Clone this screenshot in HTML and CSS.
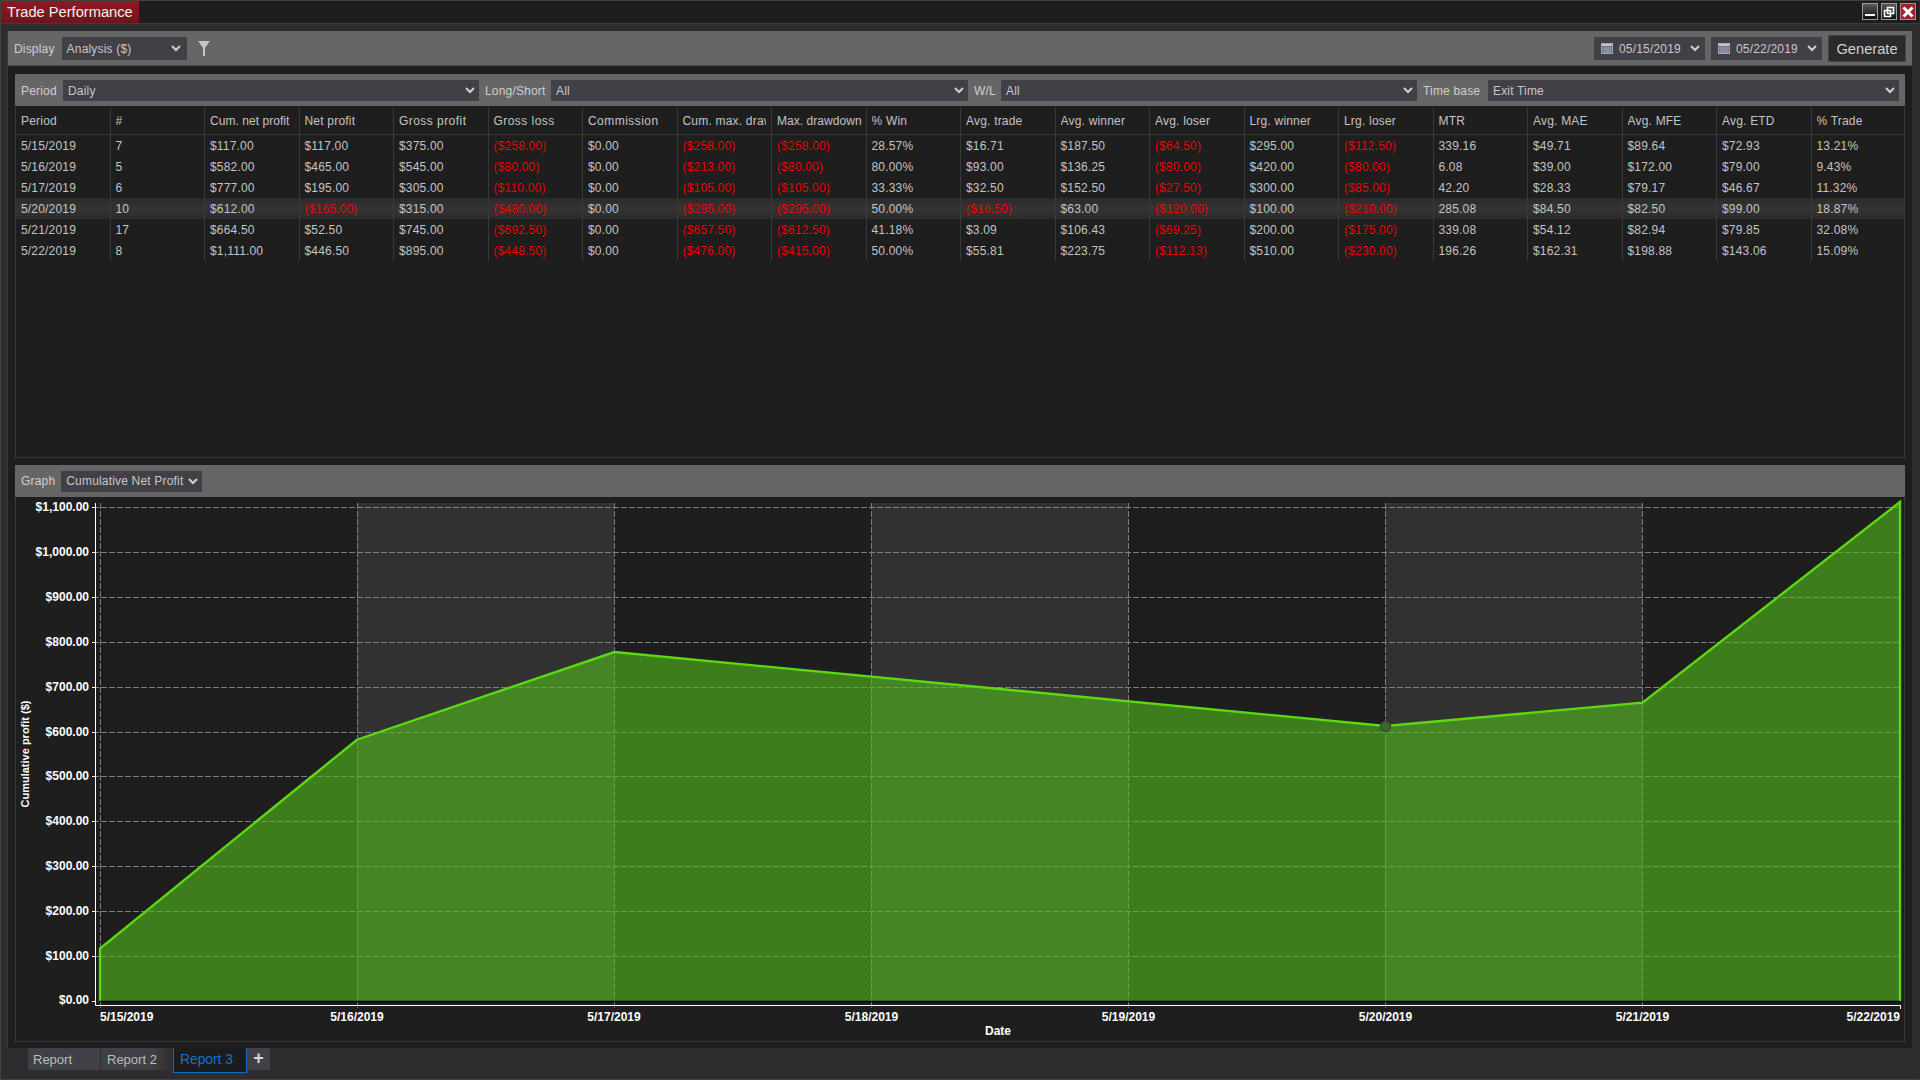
FILE: index.html
```html
<!DOCTYPE html>
<html lang="en">
<head>
<meta charset="utf-8">
<title>Trade Performance</title>
<link rel="stylesheet" href="styles.css">
</head>
<body>
<div class="window">
  <header class="titlebar">
    <div class="title-tab">Trade Performance</div>
    <div class="win-controls">
      <div class="win-btn"><svg width="14" height="14" viewBox="0 0 14 14"><rect x="2" y="9" width="10" height="2" fill="#fff"/></svg></div>
      <div class="win-btn"><svg width="14" height="14" viewBox="0 0 14 14"><path d="M5.5 2.5h6v6h-6zM2.5 5.5h6v6h-6z" fill="none" stroke="#fff" stroke-width="1.6"/></svg></div>
      <div class="win-btn win-close"><svg width="14" height="14" viewBox="0 0 14 14"><path d="M2.5 2.5l9 9M11.5 2.5l-9 9" stroke="#fff" stroke-width="3"/></svg></div>
    </div>
  </header>

  <main class="main">
    <div class="toolbar">
      <span class="label">Display</span>
      <div class="select sel-display"><span>Analysis ($)</span><svg class="chev" width="10" height="7" viewBox="0 0 10 7"><path d="M1 1l4 4 4-4" fill="none" stroke="#d0d0d0" stroke-width="2"/></svg></div>
      <svg class="filter-icon" width="13" height="15" viewBox="0 0 13 15"><path d="M0 0h12L7 7v8H5V7z" fill="#c6c6c6"/></svg>
      <div class="spacer"></div>
      <div class="select sel-date">
        <svg class="cal" width="12" height="11" viewBox="0 0 12 11"><rect x="0.5" y="0.5" width="11" height="10" fill="#46464c" stroke="#a8a8ac"/><rect x="1" y="1" width="10" height="2" fill="#c0c4cc"/><path d="M1 5h10M1 7h10M1 9h10M3 3v7M5 3v7M7 3v7M9 3v7" stroke="#9aa6bc" stroke-width="1"/></svg>
        <span>05/15/2019</span><svg class="chev" width="10" height="7" viewBox="0 0 10 7"><path d="M1 1l4 4 4-4" fill="none" stroke="#d0d0d0" stroke-width="2"/></svg></div>
      <div class="select sel-date">
        <svg class="cal" width="12" height="11" viewBox="0 0 12 11"><rect x="0.5" y="0.5" width="11" height="10" fill="#46464c" stroke="#a8a8ac"/><rect x="1" y="1" width="10" height="2" fill="#c0c4cc"/><path d="M1 5h10M1 7h10M1 9h10M3 3v7M5 3v7M7 3v7M9 3v7" stroke="#9aa6bc" stroke-width="1"/></svg>
        <span>05/22/2019</span><svg class="chev" width="10" height="7" viewBox="0 0 10 7"><path d="M1 1l4 4 4-4" fill="none" stroke="#d0d0d0" stroke-width="2"/></svg></div>
      <div class="generate">Generate</div>
    </div>

    <div class="content">
      <div class="filterbar">
        <span class="label lbl-period">Period</span>
        <div class="select sel-wide"><span>Daily</span><svg class="chev" width="10" height="7" viewBox="0 0 10 7"><path d="M1 1l4 4 4-4" fill="none" stroke="#d0d0d0" stroke-width="2"/></svg></div>
        <span class="label lbl-ls">Long/Short</span>
        <div class="select sel-wide sel-second"><span>All</span><svg class="chev" width="10" height="7" viewBox="0 0 10 7"><path d="M1 1l4 4 4-4" fill="none" stroke="#d0d0d0" stroke-width="2"/></svg></div>
        <span class="label lbl-wl">W/L</span>
        <div class="select sel-wide"><span>All</span><svg class="chev" width="10" height="7" viewBox="0 0 10 7"><path d="M1 1l4 4 4-4" fill="none" stroke="#d0d0d0" stroke-width="2"/></svg></div>
        <span class="label lbl-tb">Time base</span>
        <div class="select sel-last"><span>Exit Time</span><svg class="chev" width="10" height="7" viewBox="0 0 10 7"><path d="M1 1l4 4 4-4" fill="none" stroke="#d0d0d0" stroke-width="2"/></svg></div>
      </div>

      <div class="table-panel">
        <table class="grid">
          <thead>
            <tr><th><div>Period</div></th><th><div>#</div></th><th class="th-tight"><div>Cum. net profit</div></th><th><div>Net profit</div></th><th class="th-wide"><div>Gross profit</div></th><th class="th-wide"><div>Gross loss</div></th><th class="th-wide"><div>Commission</div></th><th class="th-clip"><div>Cum. max. drawdown</div></th><th class="th-tight"><div>Max. drawdown</div></th><th><div>% Win</div></th><th><div>Avg. trade</div></th><th><div>Avg. winner</div></th><th><div>Avg. loser</div></th><th><div>Lrg. winner</div></th><th><div>Lrg. loser</div></th><th><div>MTR</div></th><th><div>Avg. MAE</div></th><th><div>Avg. MFE</div></th><th><div>Avg. ETD</div></th><th><div>% Trade</div></th></tr>
          </thead>
          <tbody>
            <tr><td>5/15/2019</td><td>7</td><td>$117.00</td><td>$117.00</td><td>$375.00</td><td class="neg">($258.00)</td><td>$0.00</td><td class="neg">($258.00)</td><td class="neg">($258.00)</td><td>28.57%</td><td>$16.71</td><td>$187.50</td><td class="neg">($64.50)</td><td>$295.00</td><td class="neg">($112.50)</td><td>339.16</td><td>$49.71</td><td>$89.64</td><td>$72.93</td><td>13.21%</td></tr>
            <tr><td>5/16/2019</td><td>5</td><td>$582.00</td><td>$465.00</td><td>$545.00</td><td class="neg">($80.00)</td><td>$0.00</td><td class="neg">($213.00)</td><td class="neg">($80.00)</td><td>80.00%</td><td>$93.00</td><td>$136.25</td><td class="neg">($80.00)</td><td>$420.00</td><td class="neg">($80.00)</td><td>6.08</td><td>$39.00</td><td>$172.00</td><td>$79.00</td><td>9.43%</td></tr>
            <tr><td>5/17/2019</td><td>6</td><td>$777.00</td><td>$195.00</td><td>$305.00</td><td class="neg">($110.00)</td><td>$0.00</td><td class="neg">($105.00)</td><td class="neg">($105.00)</td><td>33.33%</td><td>$32.50</td><td>$152.50</td><td class="neg">($27.50)</td><td>$300.00</td><td class="neg">($85.00)</td><td>42.20</td><td>$28.33</td><td>$79.17</td><td>$46.67</td><td>11.32%</td></tr>
            <tr class="selected"><td>5/20/2019</td><td>10</td><td>$612.00</td><td class="neg">($165.00)</td><td>$315.00</td><td class="neg">($480.00)</td><td>$0.00</td><td class="neg">($295.00)</td><td class="neg">($295.00)</td><td>50.00%</td><td class="neg">($16.50)</td><td>$63.00</td><td class="neg">($120.00)</td><td>$100.00</td><td class="neg">($210.00)</td><td>285.08</td><td>$84.50</td><td>$82.50</td><td>$99.00</td><td>18.87%</td></tr>
            <tr><td>5/21/2019</td><td>17</td><td>$664.50</td><td>$52.50</td><td>$745.00</td><td class="neg">($692.50)</td><td>$0.00</td><td class="neg">($657.50)</td><td class="neg">($612.50)</td><td>41.18%</td><td>$3.09</td><td>$106.43</td><td class="neg">($69.25)</td><td>$200.00</td><td class="neg">($175.00)</td><td>339.08</td><td>$54.12</td><td>$82.94</td><td>$79.85</td><td>32.08%</td></tr>
            <tr><td>5/22/2019</td><td>8</td><td>$1,111.00</td><td>$446.50</td><td>$895.00</td><td class="neg">($448.50)</td><td>$0.00</td><td class="neg">($476.00)</td><td class="neg">($415.00)</td><td>50.00%</td><td>$55.81</td><td>$223.75</td><td class="neg">($112.13)</td><td>$510.00</td><td class="neg">($230.00)</td><td>196.26</td><td>$162.31</td><td>$198.88</td><td>$143.06</td><td>15.09%</td></tr>
          </tbody>
        </table>
      </div>

      <div class="graphbar">
        <span class="label">Graph</span>
        <div class="select sel-graph"><span>Cumulative Net Profit</span><svg class="chev" width="10" height="7" viewBox="0 0 10 7"><path d="M1 1l4 4 4-4" fill="none" stroke="#d0d0d0" stroke-width="2"/></svg></div>
      </div>

      <div class="chart-panel">
        <svg class="chart" width="1888" height="544" viewBox="16 496 1888 544">
          <g class="bands">
            <rect x="357" y="502" width="257" height="498"/>
            <rect x="871" y="502" width="257" height="498"/>
            <rect x="1385" y="502" width="257" height="498"/>
          </g>
          <path class="grid-lines" d="M93 506.5H1900M93 551.5H1900M93 596.5H1900M93 641.5H1900M93 686.5H1900M93 731.5H1900M93 775.5H1900M93 820.5H1900M93 865.5H1900M93 910.5H1900M93 955.5H1900M100.5 502V1007M357.5 502V1007M614.5 502V1007M871.5 502V1007M1128.5 502V1007M1385.5 502V1007M1642.5 502V1007"/>
          <path class="area" d="M100 1000V947.5L357 738.7L614.5 651L1385.5 725L1642.5 701.6L1900 501V1000Z"/>
          <path class="area-line" d="M100 1000V947.5L357 738.7L614.5 651L1385.5 725L1642.5 701.6L1900 501V1000"/>
          <path class="zero-line" d="M100 1000.5H1900"/>
          <circle class="marker" cx="1385.5" cy="725.5" r="5"/>
          <path class="axes" d="M95.5 502V1004.5H1900.5V1008M92 506.5H95M92 551.5H95M92 596.5H95M92 641.5H95M92 686.5H95M92 731.5H95M92 775.5H95M92 820.5H95M92 865.5H95M92 910.5H95M92 955.5H95M92 1000.5H95"/>
          <g class="axis-y">
            <text x="89" y="510">$1,100.00</text>
            <text x="89" y="555">$1,000.00</text>
            <text x="89" y="600">$900.00</text>
            <text x="89" y="645">$800.00</text>
            <text x="89" y="689.5">$700.00</text>
            <text x="89" y="735">$600.00</text>
            <text x="89" y="779">$500.00</text>
            <text x="89" y="824">$400.00</text>
            <text x="89" y="869">$300.00</text>
            <text x="89" y="913.5">$200.00</text>
            <text x="89" y="959">$100.00</text>
            <text x="89" y="1003">$0.00</text>
          </g>
          <g class="axis-x">
            <text class="first" x="100" y="1020">5/15/2019</text>
            <text x="357" y="1020">5/16/2019</text>
            <text x="614" y="1020">5/17/2019</text>
            <text x="871.5" y="1020">5/18/2019</text>
            <text x="1128.5" y="1020">5/19/2019</text>
            <text x="1385.5" y="1020">5/20/2019</text>
            <text x="1642.5" y="1020">5/21/2019</text>
            <text class="last" x="1900" y="1020">5/22/2019</text>
            <text x="998" y="1034">Date</text>
          </g>
          <text class="axis-title" transform="translate(29 753) rotate(-90)">Cumulative profit ($)</text>
        </svg>
      </div>
    </div>
  </main>

  <nav class="tabs">
    <div class="tab tab-1">Report</div>
    <div class="tab tab-2">Report 2</div>
    <div class="tab tab-active">Report 3</div>
    <div class="tab tab-add">+</div>
  </nav>
</div>
</body>
</html>
```
FILE: styles.css
```css
* { box-sizing: border-box; }
html, body { margin: 0; padding: 0; height: 100%; }
body {
  font-family: "Liberation Sans", Arial, sans-serif;
  font-size: 12px;
  letter-spacing: 0.18px;
  color: #c4c4c4;
  background: #2d2d2f;
  overflow: hidden;
}
.window {
  width: 1920px;
  height: 1080px;
  display: flex;
  flex-direction: column;
  background: #2d2d2f;
  border: 1px solid #424244;
  border-right-color: #2d2d2f;
}
.titlebar {
  height: 23px;
  flex: none;
  display: flex;
  justify-content: space-between;
  background: #1e1e1e;
  border-bottom: 1px solid #3c3c3e;
}
.title-tab {
  width: 138px;
  height: 22px;
  padding-left: 6px;
  font-size: 14.67px;
  line-height: 23px;
  letter-spacing: 0;
  color: #f0f0f0;
  background: linear-gradient(#8c1a22, #6e141b);
}
.win-controls {
  display: flex;
  gap: 3px;
  padding: 2px 3px 0 0;
}
.win-btn {
  width: 16px;
  height: 17px;
  border: 1px solid #9a9a9a;
  background: linear-gradient(#5a5a5a, #0e0e0e);
  display: flex;
  align-items: center;
  justify-content: center;
}
.win-close {
  background: #a5202a;
  border-color: #b08a8a;
}
.main {
  flex: none;
  height: 1017px;
  margin: 7px 7px 0 7px;
  display: flex;
  flex-direction: column;
  background: #1e1e1e;
  box-shadow: -1px 0 0 #3c3c3e;
}
.toolbar {
  height: 35px;
  flex: none;
  display: flex;
  align-items: center;
  padding: 1px 6px 0 6px;
  background: #666666;
  border-bottom: 1px solid #4c4c4c;
}
.label { color: #cfcfcf; }
.select {
  height: 23px;
  display: flex;
  align-items: center;
  justify-content: space-between;
  background: #404046;
  color: #c8c8c8;
  padding: 0 5px 0 5px;
  flex: none;
}
.chev { flex: none; }
.sel-display { width: 125px; margin-left: 7px; padding-right: 6px; }
.filter-icon { margin-left: 11px; flex: none; margin-bottom: 1px; }
.spacer { flex: 1; }
.sel-date { width: 111px; margin-right: 6px; padding: 0 5px 0 7px; }
.cal { flex: none; margin-right: 6px; }
.sel-date span { flex: 1; }
.generate {
  width: 78px;
  height: 27px;
  flex: none;
  display: flex;
  align-items: center;
  justify-content: center;
  font-size: 14.67px;
  letter-spacing: 0;
  color: #d2d2d2;
  background: #2a2a2c;
  border: 1px solid #464648;
}
.content {
  flex: 1;
  display: flex;
  flex-direction: column;
  padding: 8px 0 7px 7px;
  width: 1897px;
}
.filterbar {
  height: 32px;
  flex: none;
  display: flex;
  align-items: center;
  padding: 1px 0 0 6px;
  background: #666666;
}
.filterbar .select {
  height: 21px;
  padding-right: 4px;
}
.lbl-period { width: 42px; }
.lbl-ls { width: 66px; margin-left: 6px; }
.lbl-wl { width: 27px; margin-left: 6px; }
.lbl-tb { width: 65px; margin-left: 6px; }
.sel-wide { width: 416px; }
.sel-second { width: 417px; }
.sel-last { width: 411px; }
.table-panel {
  height: 351px;
  margin-top: 1px;
  flex: none;
  border: 1px solid #3a3a3c;
  border-top: none;
  overflow: hidden;
}
.grid {
  width: 1890px;
  margin-left: -1px;
  table-layout: fixed;
  border-collapse: separate;
  border-spacing: 0;
}
.grid th, .grid td {
  padding: 0 4px 0 5px;
  font-weight: normal;
  text-align: left;
  white-space: nowrap;
  border-left: 1px solid #39393b;
}
.grid th:first-child, .grid td:first-child {
  border-left: none;
  padding-left: 6px;
}
.grid th {
  height: 28px;
  letter-spacing: 0.2px;
  border-bottom: 1px solid #39393b;
}
.grid th.th-tight { letter-spacing: 0.05px; }
.grid th.th-wide { letter-spacing: 0.45px; }
.grid th.th-clip { padding-right: 5px; }
.grid th div { overflow: hidden; }
.grid td { height: 21px; }
.neg { color: #e60000; }
.grid tr.selected td {
  background: linear-gradient(#2b2b2b, #343434 50%, #2c2c2c);
}
.graphbar {
  height: 32px;
  margin-top: 7px;
  flex: none;
  display: flex;
  align-items: center;
  padding-left: 6px;
  background: #666666;
}
.graphbar .select {
  height: 21px;
}
.sel-graph { width: 141px; margin-left: 6px; padding-right: 4px; }
.chart-panel {
  height: 545px;
  flex: none;
  border: 1px solid #3a3a3c;
  border-top: none;
}
.chart { display: block; }
.bands rect { fill: #323232; }
.grid-lines { fill: none; stroke: #7e7e7e; stroke-width: 1; stroke-dasharray: 6 2; }
.area { fill: rgb(83, 188, 27); fill-opacity: 0.6; }
.area-line { fill: none; stroke: #5cd910; stroke-width: 2.4; }
.zero-line { stroke: #000; stroke-width: 1.5; }
.marker { fill: #3c6a2a; stroke: #3a4a38; stroke-width: 1.5; }
.axes { fill: none; stroke: #ffffff; stroke-width: 1; }
.chart text {
  font-family: "Liberation Sans", Arial, sans-serif;
  font-size: 12px;
  font-weight: bold;
  letter-spacing: 0;
  fill: #ffffff;
}
.axis-y text { text-anchor: end; }
.axis-x text { text-anchor: middle; }
.axis-x text.first { text-anchor: start; }
.axis-x text.last { text-anchor: end; }
.chart .axis-title { text-anchor: middle; font-size: 11px; }
.tabs {
  flex: 1;
  display: flex;
  align-items: flex-start;
  padding-left: 27px;
}
.tab {
  height: 22px;
  line-height: 23px;
  padding-left: 6px;
  font-size: 13px;
  letter-spacing: 0;
  color: #bcbcbc;
  flex: none;
}
.tab-1 { width: 72px; background: #404046; margin-right: 1px; padding-left: 5px; }
.tab-2 { width: 72px; background: linear-gradient(90deg, #404046 70%, #2d2d2f); }
.tab-active {
  width: 74px;
  height: 25px;
  font-size: 13.8px;
  color: #0f74c8;
  background: #1c1c1e;
  border: 1px solid #0f6cc0;
  border-top: none;
}
.tab-add {
  width: 23px;
  padding: 0;
  text-align: center;
  font-size: 18px;
  font-weight: bold;
  line-height: 21px;
  color: #d8d8d8;
  background: #404046;
}
```
